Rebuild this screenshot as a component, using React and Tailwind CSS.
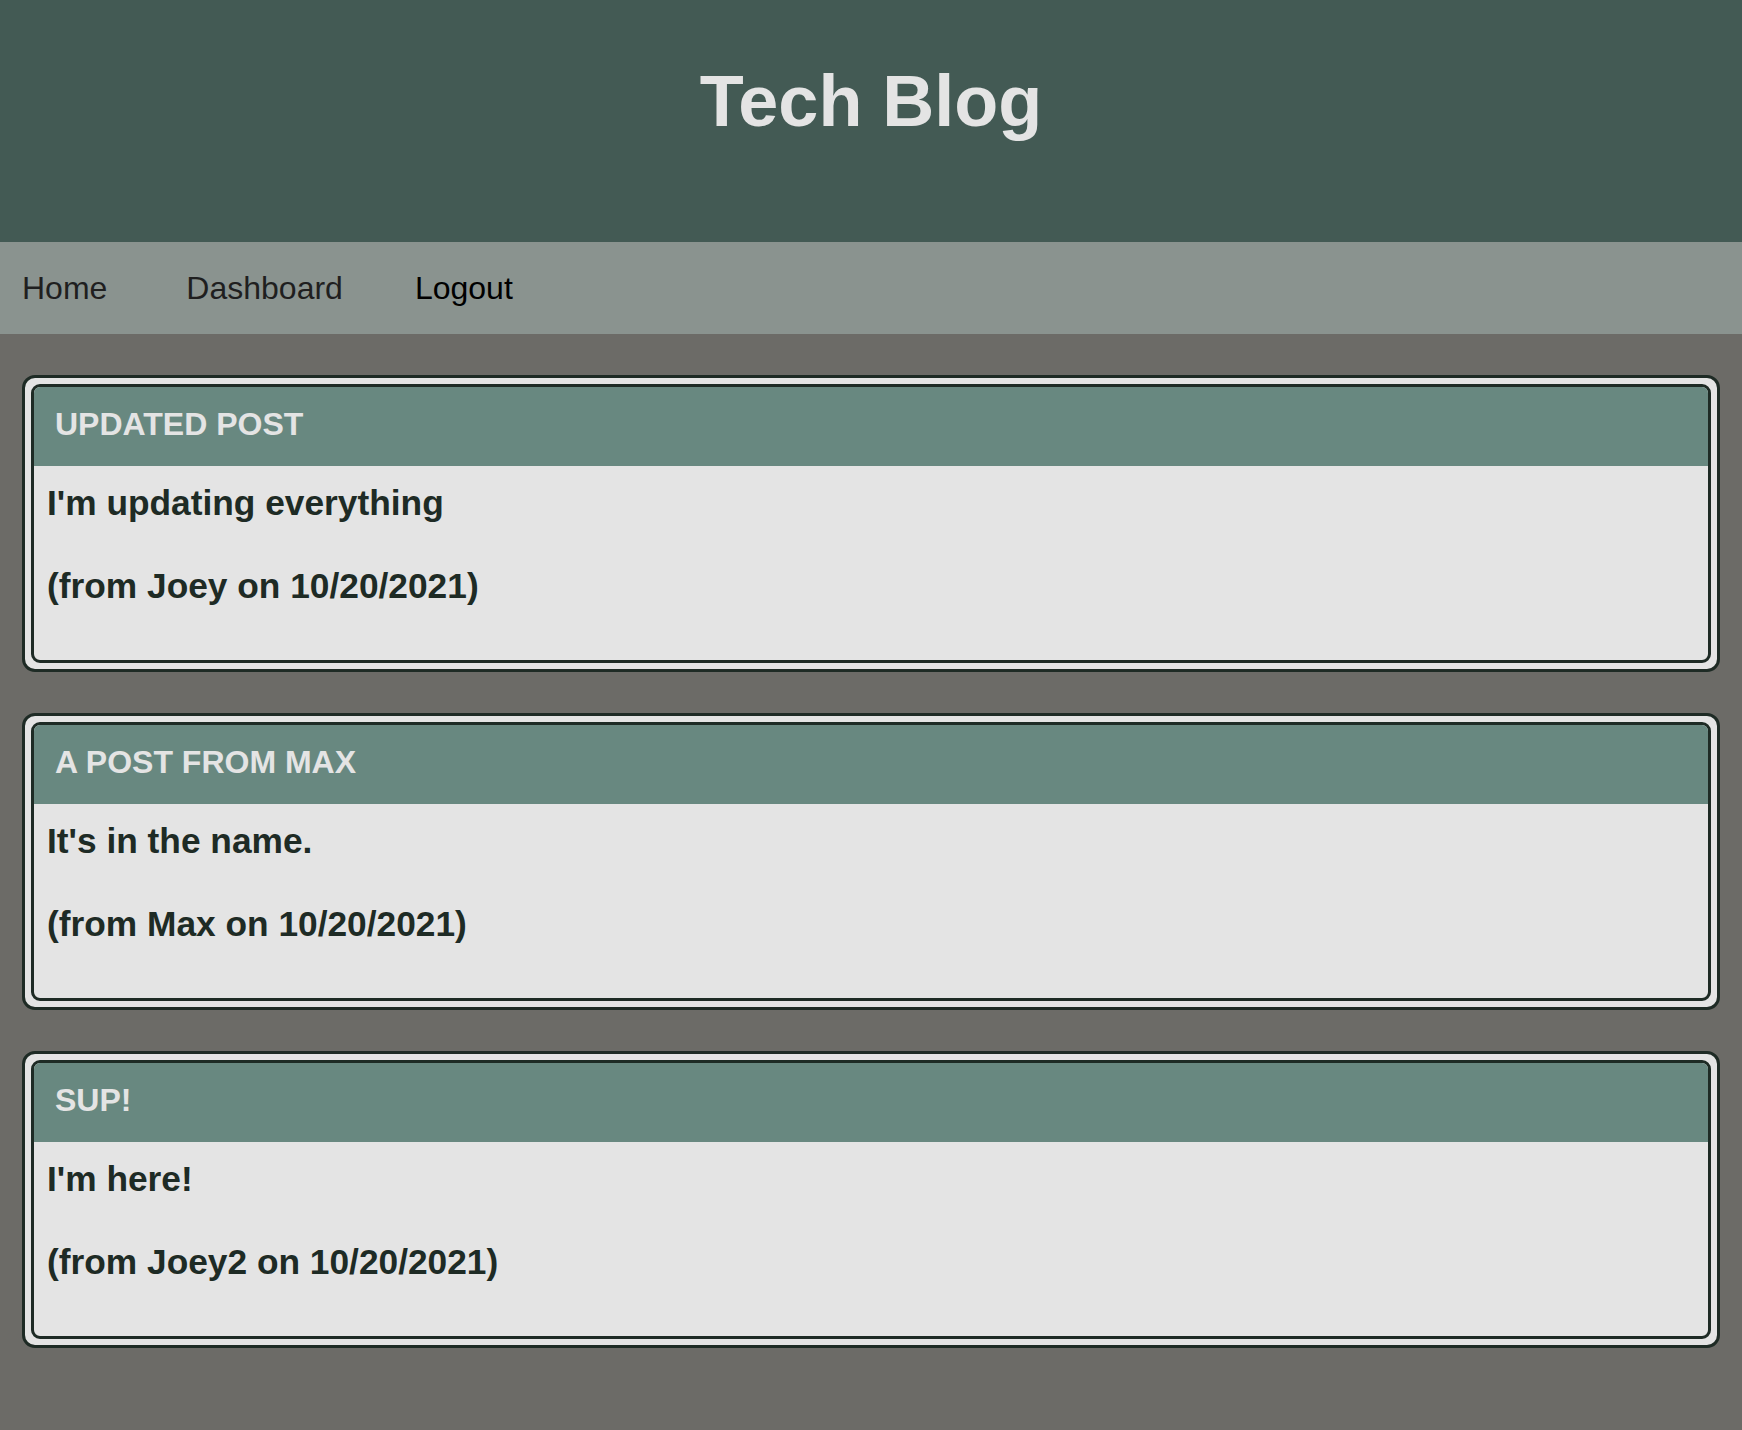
const posts = [
  { id: 1, title: "Updated Post", body: "I'm updating everything", author: "Joey", date: "10/20/2021" },
  { id: 2, title: "A post from Max", body: "It's in the name.", author: "Max", date: "10/20/2021" },
  { id: 3, title: "SUP!", body: "I'm here!", author: "Joey2", date: "10/20/2021" },
];

const PostCard = ({ post }) => {
  return (
    <div className="rounded-[13px] border-[3px] border-[#1e2b25] bg-[#e4e4e4] p-[6px]">
      <div className="overflow-hidden rounded-[9px] border-[3px] border-[#1e2b25] bg-[#e4e4e4]">
        <h2 className="h-[79px] bg-[#688880] pl-[21px] pt-[20px] text-[32px] font-bold uppercase leading-[34px] text-[#e4e4e4]">
          {post.title}
        </h2>
        <div className="pl-[13px] pr-[12px] pb-[54px] pt-[17px] text-[35.3px] font-bold leading-[40px] text-[#1e2b25]">
          <p>{post.body}</p>
          <p className="mt-[43px]">
            (from {post.author} on {post.date})
          </p>
        </div>
      </div>
    </div>
  );
};

export default function App() {
  return (
    <div className="min-h-screen bg-[#6c6b67] font-[family-name:'Liberation_Sans',Arial,sans-serif]">
      <header className="h-[242px] bg-[#435a54] pt-[65px] text-center">
        <h1 className="text-[72px] font-bold leading-none text-[#e4e4e4]">Tech Blog</h1>
      </header>

      <nav className="flex h-[92px] items-center bg-[#8a938f] pl-[22px] text-[32px]">
        <a className="text-[#1f1f1f]">Home</a>
        <a className="ml-[79px] text-[#1f1f1f]">Dashboard</a>
        <a className="ml-[72px] text-black">Logout</a>
      </nav>

      <main className="flex flex-col gap-[41px] px-[22px] pb-[80px] pt-[41px]">
        {posts.map((post) => (
          <PostCard key={post.id} post={post} />
        ))}
      </main>
    </div>
  );
}
